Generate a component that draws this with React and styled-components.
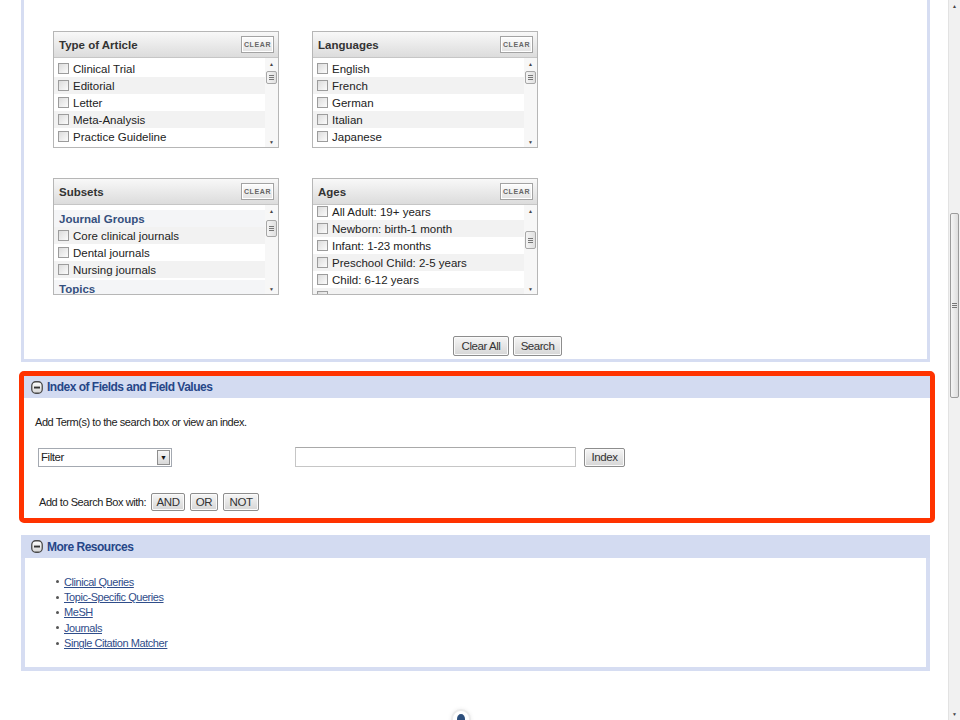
import React from 'react'
import styled, { createGlobalStyle, css } from 'styled-components'

const sans = `"Liberation Sans", Arial, sans-serif`
const panelBlue = '#d6ddf2'
const titleBlue = '#264688'

// the original page uses a narrow Arial; no narrow face here, so tighten Liberation Sans
const condensed = css`
  font-family: ${sans};
  font-size: 11px;
  letter-spacing: -0.45px;
`

const GlobalStyle = createGlobalStyle`
  html, body {
    margin: 0;
    padding: 0;
    height: 720px;
    overflow: hidden;
    background: #fff;
  }
  * { box-sizing: border-box; }
`

const filterBoxes = [
  {
    title: 'Type of Article',
    offset: 2,
    thumbTop: 2,
    thumbHeight: 13,
    rows: ['Clinical Trial', 'Editorial', 'Letter', 'Meta-Analysis', 'Practice Guideline'],
  },
  {
    title: 'Languages',
    offset: 2,
    thumbTop: 2,
    thumbHeight: 13,
    rows: ['English', 'French', 'German', 'Italian', 'Japanese'],
  },
  {
    title: 'Subsets',
    offset: 5,
    thumbTop: 4,
    thumbHeight: 17,
    rows: [
      { group: 'Journal Groups' },
      'Core clinical journals',
      'Dental journals',
      'Nursing journals',
      { group: 'Topics', gap: true },
    ],
  },
  {
    title: 'Ages',
    offset: -2,
    thumbTop: 15,
    thumbHeight: 18,
    rows: [
      'All Adult: 19+ years',
      'Newborn: birth-1 month',
      'Infant: 1-23 months',
      'Preschool Child: 2-5 years',
      'Child: 6-12 years',
      '',
    ],
  },
]

const resources = ['Clinical Queries', 'Topic-Specific Queries', 'MeSH', 'Journals', 'Single Citation Matcher']

function MinusIcon() {
  return (
    <svg width="12" height="13" viewBox="0 0 12 13">
      <defs>
        <linearGradient id="mg" x1="0" y1="0" x2="0" y2="1">
          <stop offset="0" stopColor="#ffffff" />
          <stop offset="1" stopColor="#d4d4d4" />
        </linearGradient>
      </defs>
      <rect x="0.75" y="0.75" width="10.5" height="11.5" rx="4" fill="url(#mg)" stroke="#4a4a4a" strokeWidth="1.3" />
      <rect x="3" y="5.6" width="6" height="1.9" fill="#333" />
    </svg>
  )
}

function MiniScrollbar({ thumbTop, thumbHeight }) {
  return (
    <ScrollTrack>
      <Arrow>▲</Arrow>
      <TrackBody>
        <Thumb $top={thumbTop} $height={thumbHeight}>
          <Grip />
        </Thumb>
      </TrackBody>
      <Arrow>▼</Arrow>
    </ScrollTrack>
  )
}

function FilterBox({ box }) {
  return (
    <BoxFrame>
      <BoxHeader>
        <BoxTitle>{box.title}</BoxTitle>
        <ClearButton>CLEAR</ClearButton>
      </BoxHeader>
      <BoxBody>
        <Viewport>
          <RowList $offset={box.offset}>
            {box.rows.map((row, i) =>
              typeof row === 'string' ? (
                <Row key={i} $alt={i % 2 === 1}>
                  <Check />
                  {row && <RowLabel>{row}</RowLabel>}
                </Row>
              ) : (
                <GroupRow key={i} $gap={row.gap}>
                  {row.group}
                </GroupRow>
              )
            )}
          </RowList>
        </Viewport>
        <MiniScrollbar thumbTop={box.thumbTop} thumbHeight={box.thumbHeight} />
      </BoxBody>
    </BoxFrame>
  )
}

export default function App() {
  return (
    <>
      <GlobalStyle />
      <Window>
        <Main>
          <LimitsPanel>
            <BoxGrid>
              {filterBoxes.map((box) => (
                <FilterBox key={box.title} box={box} />
              ))}
            </BoxGrid>
            <ActionRow>
              <GrayButton $w={56} $h={20}>Clear All</GrayButton>
              <GrayButton $w={49} $h={20}>Search</GrayButton>
            </ActionRow>
          </LimitsPanel>

          <Highlight>
            <SectionHeader>
              <MinusIcon />
              <SectionTitle>Index of Fields and Field Values</SectionTitle>
            </SectionHeader>
            <IndexBody>
              <Hint>Add Term(s) to the search box or view an index.</Hint>
              <FieldRow>
                <Select>
                  <SelectText>Filter</SelectText>
                  <SelectArrow>▼</SelectArrow>
                </Select>
                <TermInput />
                <GrayButton $w={41} $h={19}>Index</GrayButton>
              </FieldRow>
              <OperatorRow>
                <OperatorLabel>Add to Search Box with:</OperatorLabel>
                <GrayButton $w={34} $h={18}>AND</GrayButton>
                <GrayButton $w={28} $h={18}>OR</GrayButton>
                <GrayButton $w={36} $h={18}>NOT</GrayButton>
              </OperatorRow>
            </IndexBody>
          </Highlight>

          <ResourcesPanel>
            <ResourcesHeader>
              <MinusIcon />
              <SectionTitle>More Resources</SectionTitle>
            </ResourcesHeader>
            <ResourceList>
              {resources.map((r) => (
                <ResourceItem key={r}>
                  <Bullet />
                  <ResourceLink href="#">{r}</ResourceLink>
                </ResourceItem>
              ))}
            </ResourceList>
          </ResourcesPanel>

          <Footer>
            <FooterBadge>
              <FooterDot />
            </FooterBadge>
          </Footer>
        </Main>

        <PageScroll>
          <PageArrow>▲</PageArrow>
          <PageTrack>
            <PageThumb>
              <Grip />
            </PageThumb>
          </PageTrack>
          <PageArrow>▼</PageArrow>
        </PageScroll>
      </Window>
    </>
  )
}

const Window = styled.div`
  display: flex;
  width: 960px;
  height: 720px;
  overflow: hidden;
`

const Main = styled.div`
  flex: 1;
  padding: 0 18px 0 21px;
  display: flex;
  flex-direction: column;
`

const LimitsPanel = styled.div`
  flex: none;
  border: 3px solid ${panelBlue};
  border-top: none;
  padding: 31px 0 3px 29px;
`

const BoxGrid = styled.div`
  display: grid;
  grid-template-columns: 226px 226px;
  column-gap: 33px;
  row-gap: 30px;
`

const BoxFrame = styled.div`
  width: 226px;
  height: 117px;
  border: 1px solid #b6b6b6;
  display: flex;
  flex-direction: column;
  background: #fff;
`

const BoxHeader = styled.div`
  height: 26px;
  flex: none;
  display: flex;
  align-items: center;
  justify-content: space-between;
  padding: 0 4px 0 5px;
  background: linear-gradient(#f8f8f8, #dcdcdc);
  border-bottom: 1px solid #c6c6c6;
`

const BoxTitle = styled.span`
  font: bold 11.5px ${sans};
  color: #333;
`

const ClearButton = styled.span`
  width: 33px;
  height: 17px;
  display: flex;
  align-items: center;
  justify-content: center;
  border: 1px solid #a3a3a3;
  box-shadow: inset 0 0 0 1px #fff;
  background: linear-gradient(#fdfdfd, #e2e2e2);
  font: bold 7px ${sans};
  letter-spacing: 0.6px;
  color: #666;
`

const BoxBody = styled.div`
  flex: 1;
  display: flex;
  min-height: 0;
`

const Viewport = styled.div`
  flex: 1;
  overflow: hidden;
`

const RowList = styled.div`
  margin-top: ${(p) => p.$offset}px;
`

const Row = styled.div`
  height: 17px;
  display: flex;
  align-items: center;
  padding-left: 4px;
  background: ${(p) => (p.$alt ? '#f2f2f2' : '#fff')};
`

const Check = styled.span`
  width: 11px;
  height: 11px;
  flex: none;
  border: 1px solid #9c9c9c;
  background: linear-gradient(135deg, #dcdcdc, #fbfbfb);
  margin-right: 4px;
`

const RowLabel = styled.span`
  font: 11.5px ${sans};
  color: #222;
  white-space: nowrap;
`

const GroupRow = styled.div`
  height: 17px;
  display: flex;
  align-items: center;
  padding-left: 5px;
  margin-top: ${(p) => (p.$gap ? '2px' : '0')};
  background: #f4f5f7;
  font: bold 11.5px ${sans};
  color: #35507e;
`

const ScrollTrack = styled.div`
  width: 13px;
  flex: none;
  display: flex;
  flex-direction: column;
  background: #f7f7f7;
`

const Arrow = styled.div`
  height: 11px;
  flex: none;
  display: flex;
  align-items: center;
  justify-content: center;
  font: 5px ${sans};
  color: #444;
`

const TrackBody = styled.div`
  flex: 1;
  padding: 0 1px;
`

const Thumb = styled.div`
  margin-top: ${(p) => p.$top}px;
  height: ${(p) => p.$height}px;
  border: 1px solid #a7a7a7;
  border-radius: 2px;
  background: linear-gradient(90deg, #f4f4f4, #e0e0e0);
  display: flex;
  align-items: center;
  justify-content: center;
`

const Grip = styled.span`
  width: 5px;
  height: 5px;
  border-top: 1px solid #777;
  border-bottom: 1px solid #777;
  &::after {
    content: '';
    display: block;
    margin-top: 1px;
    height: 1px;
    background: #777;
  }
`

const ActionRow = styled.div`
  display: flex;
  gap: 4px;
  margin-top: 41px;
  padding-left: 400px;
`

const GrayButton = styled.button`
  width: ${(p) => p.$w}px;
  height: ${(p) => p.$h}px;
  padding: 0;
  border: 1px solid #8d8d8d;
  border-radius: 2px;
  background: linear-gradient(#f6f6f6, #d6d6d6);
  box-shadow: inset 0 0 0 1px #fafafa;
  ${condensed};
  font-size: 11.5px;
  color: #333;
  flex: none;
`

const Highlight = styled.div`
  flex: none;
  margin: 9px -5px 0 -2px;
  border: 5px solid #ff3300;
  border-radius: 5px;
`

const SectionHeader = styled.div`
  height: 22px;
  display: flex;
  align-items: center;
  gap: 4px;
  padding-left: 7px;
  background: #d3dbf1;
  svg {
    flex: none;
  }
`

const ResourcesHeader = styled(SectionHeader)`
  height: 23px;
  margin: 0 -4px;
  padding-left: 10px;
`

const SectionTitle = styled.span`
  font: bold 12px ${sans};
  letter-spacing: -0.5px;
  color: ${titleBlue};
`

const IndexBody = styled.div`
  background: #fff;
  padding: 16px 0 7px 11px;
`

const Hint = styled.div`
  ${condensed};
  line-height: 16px;
  color: #222;
`

const FieldRow = styled.div`
  display: flex;
  align-items: center;
  margin-top: 17px;
  padding-left: 3px;
`

const Select = styled.div`
  width: 134px;
  height: 19px;
  border: 1px solid #a4a9b1;
  display: flex;
  align-items: center;
  justify-content: space-between;
  padding: 0 1px 0 2px;
  background: #fff;
`

const SelectText = styled.span`
  ${condensed};
  font-size: 11.5px;
  color: #222;
`

const SelectArrow = styled.span`
  width: 13px;
  height: 15px;
  border: 1px solid #8e8e8e;
  background: linear-gradient(#f6f6f6, #d8d8d8);
  display: flex;
  align-items: center;
  justify-content: center;
  font: 7px ${sans};
  color: #111;
`

const TermInput = styled.div`
  width: 281px;
  height: 20px;
  margin-left: 123px;
  margin-right: 8px;
  border: 1px solid #c6c6c6;
  border-top-color: #a9a9a9;
  background: #fff;
`

const OperatorRow = styled.div`
  display: flex;
  align-items: center;
  height: 18px;
  gap: 5px;
  margin-top: 26px;
  padding-left: 4px;
`

const OperatorLabel = styled.span`
  ${condensed};
  color: #222;
`

const ResourcesPanel = styled.div`
  flex: none;
  margin-top: 12px;
  border: 4px solid ${panelBlue};
  border-top: none;
`

const ResourceList = styled.ul`
  margin: 0;
  padding: 16px 0 16px 31px;
  list-style: none;
`

const ResourceItem = styled.li`
  height: 15.4px;
  display: flex;
  align-items: center;
  ${condensed};
  color: #333;
`

const Bullet = styled.span`
  width: 3px;
  height: 3px;
  border-radius: 50%;
  background: #555;
  margin-right: 5px;
  flex: none;
`

const ResourceLink = styled.a`
  color: #2f4d8a;
  text-decoration: underline;
`

const Footer = styled.div`
  margin-top: 38px;
  padding-left: 430px;
`

const FooterBadge = styled.div`
  width: 20px;
  height: 20px;
  border-radius: 50%;
  border: 2px solid #ececec;
  box-shadow: 0 0 4px rgba(0, 0, 0, 0.08);
  display: flex;
  justify-content: center;
  padding-top: 3px;
  background: #fff;
`

const FooterDot = styled.span`
  width: 8px;
  height: 10px;
  border-radius: 50%;
  background: #2d4f7c;
`

const PageScroll = styled.div`
  width: 12px;
  flex: none;
  display: flex;
  flex-direction: column;
  background: #f1f1f1;
  border-left: 1px solid #e2e2e2;
`

const PageArrow = styled.div`
  height: 12px;
  flex: none;
  display: flex;
  align-items: center;
  justify-content: center;
  font: 5px ${sans};
  color: #444;
`

const PageTrack = styled.div`
  flex: 1;
  padding: 0 1px;
`

const PageThumb = styled.div`
  margin-top: 201px;
  height: 185px;
  border: 1px solid #9b9b9b;
  border-radius: 2px;
  background: linear-gradient(90deg, #f5f5f5, #dedede);
  display: flex;
  align-items: center;
  justify-content: center;
`
